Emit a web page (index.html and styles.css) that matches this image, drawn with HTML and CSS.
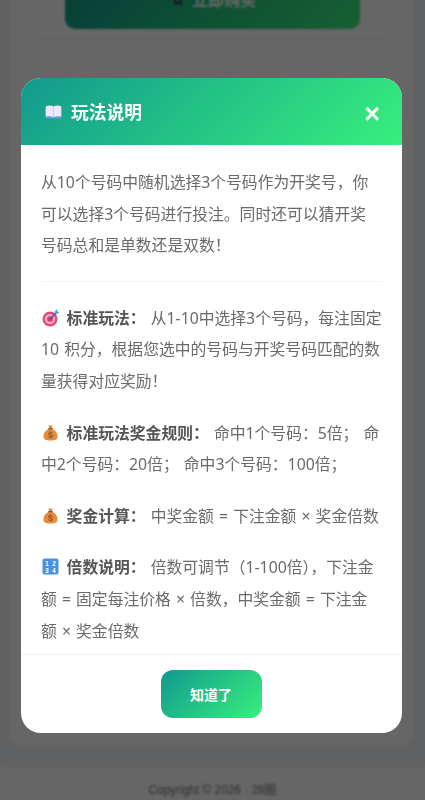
FILE: index.html
```html
<!DOCTYPE html>
<html lang="zh-CN">

<head>
    <meta charset="UTF-8" />
    <meta name="viewport" content="width=device-width, initial-scale=1.0" />
    <title>玩法说明</title>
    <link rel="stylesheet" href="styles.css">
</head>

<body>

    <div class="page">
        <div class="main">
            <div class="buy-card">
                <button class="buy-btn" type="button">
                    <svg class="cart-icon" viewBox="0 0 16 14" aria-hidden="true">
                        <path d="M1 2h3l2 8h7l2-6H5" fill="none" stroke="#445" stroke-width="2" />
                        <rect x="5" y="11" width="9" height="2" fill="#445" />
                    </svg>
                    立即购买
                </button>
            </div>
        </div>
        <div class="copyright">Copyright © 2026 · 28圈</div>
    </div>

    <div class="overlay">
        <div class="modal">
            <div class="modal-header">
                <h2 class="modal-title">
                    <svg class="book-icon" viewBox="0 0 17 14" aria-hidden="true">
                        <path d="M0 3 .5 13.500h16L17 3z" fill="#5a9ee0" />
                        <path d="M.8 1.200C3.500.2 6.500.3 8.500 1.500c2-1.200 5-1.300 7.700-.3V11.800C13.500 11 10.500 11.200 8.500 12.300 6.500 11.200 3.500 11 .8 11.800z" fill="#f0e9fb" />
                        <path d="M8.500 1.500v10.800" stroke="#c9bfe6" stroke-width=".8" />
                    </svg>
                    玩法说明
                </h2>
                <span class="modal-close">×</span>
            </div>

            <div class="modal-body">
                <p class="intro">从10个号码中随机选择3个号码作为开奖号，你可以选择3个号码进行投注。同时还可以猜开奖号码总和是单数还是双数！</p>
                <hr class="divider" />
                <p>
                    <svg class="emoji" viewBox="0 0 19 19" aria-hidden="true">
                        <circle cx="9" cy="11" r="7.500" fill="#e2467f" />
                        <circle cx="9" cy="11" r="5.200" fill="#f3a6c4" />
                        <circle cx="9" cy="11" r="2.800" fill="#d93a72" />
                        <path d="M9 11 15 5" stroke="#35608f" stroke-width="1.300" />
                        <path d="M13.500 4.500 15.500 1l1 2.500 2 .8-3.500 2.200z" fill="#4a9be8" />
                    </svg>
                    <strong>标准玩法：</strong> 从1-10中选择3个号码，每注固定 10 积分，根据您选中的号码与开奖号码匹配的数量获得对应奖励！
                </p>
                <p>
                    <svg class="emoji" viewBox="0 0 19 19" aria-hidden="true">
                        <path d="M7.500 2.500h4l-.8 3c3.500 1.500 5.800 4.500 5.800 8 0 3-2.500 4-7 4s-7-1-7-4c0-3.500 2.300-6.500 5.800-8z" fill="#e8893a" />
                        <rect x="7.200" y="5" width="4.600" height="1.300" fill="#8a5a2b" />
                        <text class="emoji-dollar" x="9.500" y="15">$</text>
                    </svg>
                    <strong>标准玩法奖金规则：</strong> 命中1个号码：5倍； 命中2个号码：20倍； 命中3个号码：100倍；
                </p>
                <p>
                    <svg class="emoji" viewBox="0 0 19 19" aria-hidden="true">
                        <path d="M7.500 2.500h4l-.8 3c3.500 1.500 5.800 4.500 5.800 8 0 3-2.500 4-7 4s-7-1-7-4c0-3.500 2.300-6.500 5.800-8z" fill="#e8893a" />
                        <rect x="7.200" y="5" width="4.600" height="1.300" fill="#8a5a2b" />
                        <text class="emoji-dollar" x="9.500" y="15">$</text>
                    </svg>
                    <strong>奖金计算：</strong> 中奖金额 = 下注金额 × 奖金倍数
                </p>
                <p>
                    <svg class="emoji" viewBox="0 0 19 19" aria-hidden="true">
                        <rect x="1.500" y="1.500" width="16" height="16" rx="2" fill="#4a90e2" />
                        <text class="emoji-digit" x="6" y="8.500">1</text>
                        <text class="emoji-digit" x="13" y="8.500">2</text>
                        <text class="emoji-digit" x="6" y="15.500">3</text>
                        <text class="emoji-digit" x="13" y="15.500">4</text>
                    </svg>
                    <strong>倍数说明：</strong> 倍数可调节（1-100倍），下注金额 = 固定每注价格 × 倍数，中奖金额 = 下注金额 × 奖金倍数
                </p>
            </div>

            <div class="modal-footer">
                <button class="ok-btn" type="button">知道了</button>
            </div>
        </div>
    </div>

</body>

</html>
```

FILE: styles.css
```css
* {
    box-sizing: border-box;
}

html,
body {
    height: 100%;
}

body {
    margin: 0;
    overflow: hidden;
    background: #f0f2f5;
    font-family: "Noto Sans", "Noto Sans CJK SC", sans-serif;
}

/* --- page behind the overlay --- */
.page {
    height: 800px;
    display: flex;
    flex-direction: column;
    overflow: hidden;
}

.main {
    flex: 1;
    margin: 0 12px 20px 10px;
    padding: 0 13px;
    background: #fff;
    border-radius: 0 0 12px 12px;
}

.buy-card {
    height: 68px;
    margin: 0 0 0 2px;
    padding: 0 40px;
    background: #fff;
    border-radius: 0 0 16px 16px;
    box-shadow: 0 1px 6px rgba(0, 0, 0, 0.06);
}

.buy-btn {
    display: flex;
    justify-content: center;
    align-items: center;
    gap: 8px;
    width: 100%;
    height: 61px;
    margin-top: -32px;
    border: none;
    border-radius: 10px;
    color: #fff;
    font: bold 16px "Noto Sans CJK SC", sans-serif;
    background: linear-gradient(135deg, #11998e, #38ef7d);
}

.cart-icon {
    width: 15px;
    height: 14px;
}

.copyright {
    height: 33px;
    padding-top: 15px;
    background: #fff;
    color: #7c7c7c;
    font: 11.850px/16px "Liberation Sans", "Noto Sans CJK SC", sans-serif;
    text-align: center;
}

/* --- modal --- */
.overlay {
    position: fixed;
    top: 0;
    left: 0;
    width: 100%;
    height: 100%;
    display: flex;
    align-items: flex-start;
    padding: 78px 0 0 21px;
    background: rgba(0, 0, 0, 0.6);
    backdrop-filter: blur(1px);
}

.modal {
    display: flex;
    flex-direction: column;
    width: 381px;
    height: 655px;
    background: #fff;
    border-radius: 20px;
    overflow: hidden;
}

.modal-header {
    display: flex;
    justify-content: space-between;
    align-items: center;
    height: 67px;
    padding: 0 22px 0 24px;
    background: linear-gradient(135deg, #11998e, #38ef7d);
    color: #fff;
}

.modal-title {
    display: flex;
    align-items: center;
    gap: 9px;
    margin: 0;
    font: bold 17.800px/27px "Noto Sans CJK SC", sans-serif;
}

.book-icon {
    width: 17px;
    height: 14px;
}

.modal-close {
    margin-top: 4px;
    font: bold 27px/28px "Liberation Sans", sans-serif;
}

.modal-body {
    flex: 1;
    overflow: hidden;
    padding: 22px 20px 20px;
    color: #6a6a6a;
    font: 15.800px/2 "Noto Sans", "Noto Sans CJK SC", sans-serif;
    word-spacing: 1px;
}

.modal-body p {
    margin: 0 0 20px;
}

.modal-body .intro {
    margin-bottom: 0;
    padding-right: 2px;
}

.modal-body strong {
    color: #555;
}

.divider {
    height: 1px;
    margin: 19px 0 21px;
    border: none;
    background: #f3f3f3;
}

.emoji {
    width: 19px;
    height: 19px;
    margin-right: 1.500px;
    vertical-align: -3px;
}

.emoji-dollar {
    fill: #8a5a2b;
    font: bold 9px "Liberation Sans", sans-serif;
    text-anchor: middle;
}

.emoji-digit {
    fill: #fff;
    font: bold 6.500px "Liberation Sans", sans-serif;
    text-anchor: middle;
}

.modal-footer {
    display: flex;
    justify-content: center;
    height: 79px;
    padding: 15px 1px 0 0;
    border-top: 1px solid #f0f0f0;
}

.ok-btn {
    width: 101px;
    height: 48px;
    border: none;
    border-radius: 12px;
    color: #fff;
    font: bold 14px "Noto Sans CJK SC", sans-serif;
    background: linear-gradient(135deg, #11998e, #38ef7d);
}
```
